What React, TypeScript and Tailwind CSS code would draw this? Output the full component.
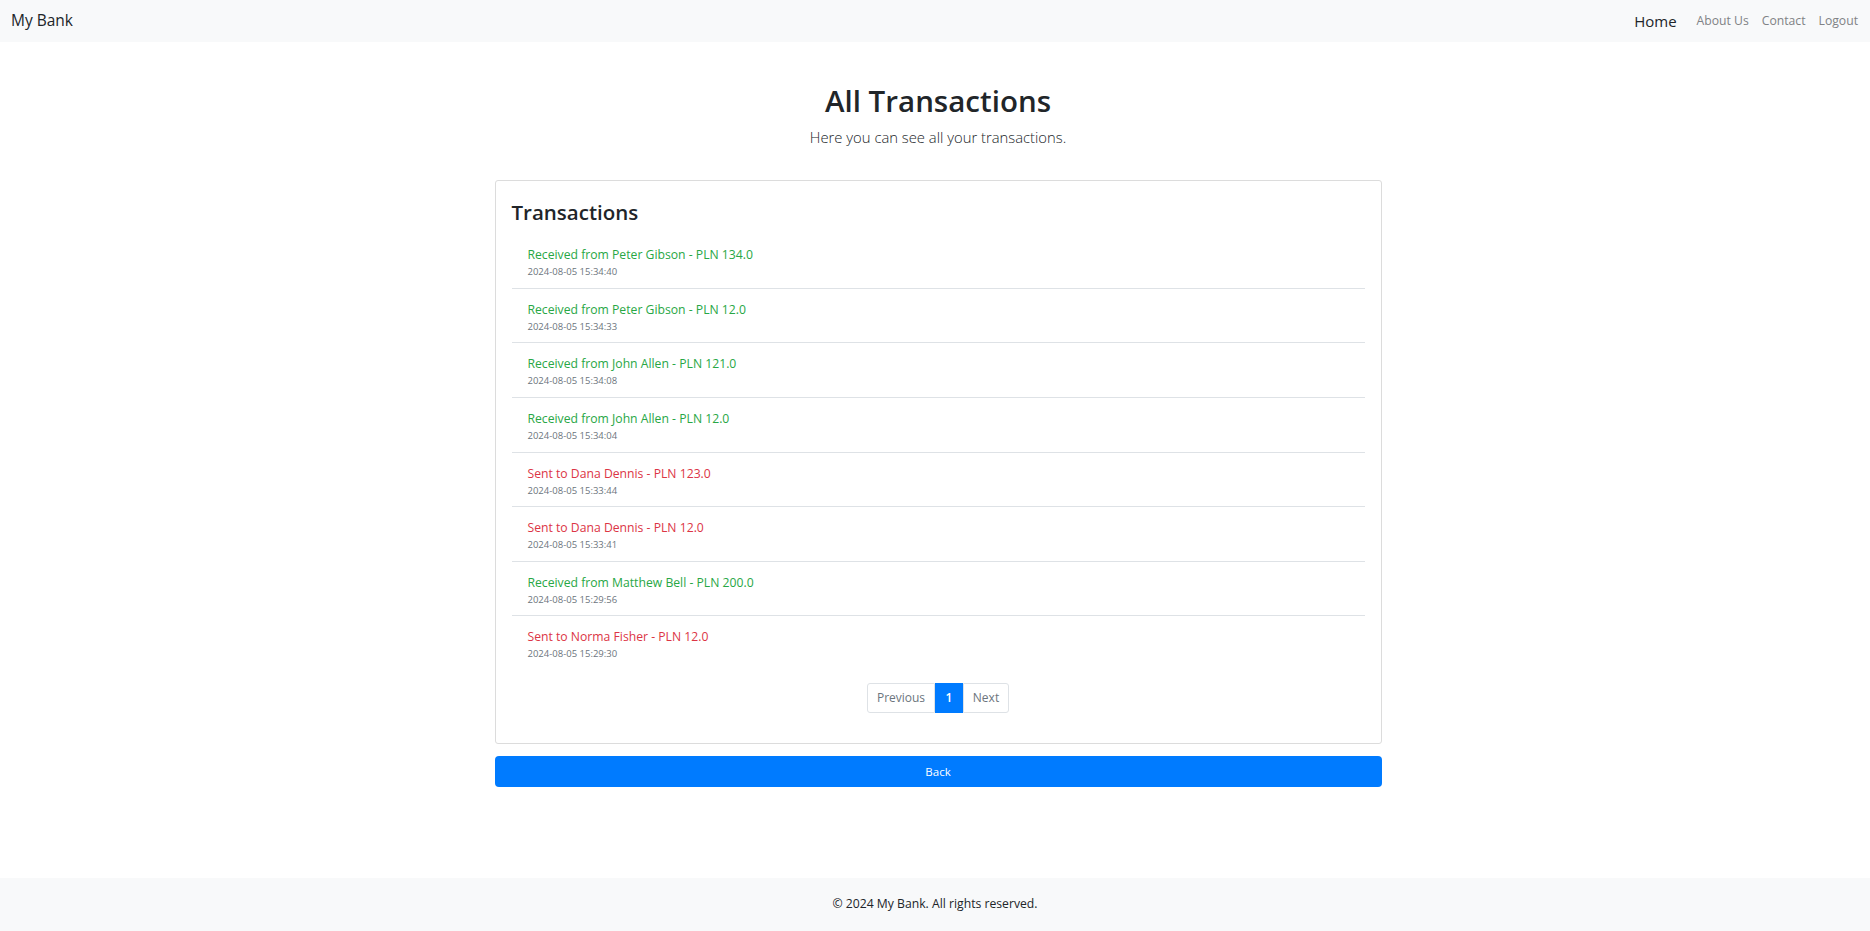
const transactions = [
  { text: "Received from Peter Gibson - PLN 134.0", date: "2024-08-05 15:34:40", received: true },
  { text: "Received from Peter Gibson - PLN 12.0", date: "2024-08-05 15:34:33", received: true },
  { text: "Received from John Allen - PLN 121.0", date: "2024-08-05 15:34:08", received: true },
  { text: "Received from John Allen - PLN 12.0", date: "2024-08-05 15:34:04", received: true },
  { text: "Sent to Dana Dennis - PLN 123.0", date: "2024-08-05 15:33:44", received: false },
  { text: "Sent to Dana Dennis - PLN 12.0", date: "2024-08-05 15:33:41", received: false },
  { text: "Received from Matthew Bell - PLN 200.0", date: "2024-08-05 15:29:56", received: true },
  { text: "Sent to Norma Fisher - PLN 12.0", date: "2024-08-05 15:29:30", received: false },
]

export default function App() {
  return (
    <div className="min-h-screen flex flex-col bg-white text-[#212529] font-['Open_Sans',sans-serif]">
      {/* navbar */}
      <nav className="h-[42px] bg-[#f8f9fa] flex items-center justify-between pl-[11px] pr-[12px]">
        <a className="text-[15.5px] text-[#212529]">My Bank</a>
        <ul className="flex items-center gap-[13px]">
          <li className="text-[15px] text-[#212529] mr-[7px]">Home</li>
          <li className="text-[12.2px] text-[#808285]">About Us</li>
          <li className="text-[12.2px] text-[#808285]">Contact</li>
          <li className="text-[12.2px] text-[#808285]">Logout</li>
        </ul>
      </nav>

      <main className="flex-1">
        <div className="text-center pt-[38px] pl-[6px]">
          <h1 className="text-[29.5px] font-semibold leading-[42px]">All Transactions</h1>
          <p className="text-[14.8px] font-light text-[#212529] mt-[4px]">Here you can see all your transactions.</p>
        </div>

        <div className="flex justify-center pl-[6px] mt-[32px]">
          <div className="w-[887px]">
            <div className="border border-[#dcdcdc] rounded-[3px] p-[16px] pb-[30px]">
              <h2 className="text-[20.5px] font-semibold leading-[28px] mt-[1px]">Transactions</h2>
              <ul className="mt-[8px]">
                {transactions.map((t, i) => (
                  <li
                    key={i}
                    className={`px-[16px] pt-[10px] pb-[9.6px] ${i < transactions.length - 1 ? "border-b border-[#dee2e6]" : ""}`}
                  >
                    <div className={`text-[12.2px] leading-[22px] ${t.received ? "text-[#28a745]" : "text-[#dc3545]"}`}>
                      {t.text}
                    </div>
                    <div className="text-[9.5px] leading-[12px] text-[#6c757d]">{t.date}</div>
                  </li>
                ))}
              </ul>
              <div className="flex justify-center mt-[13px]">
                <div className="flex h-[30px] text-[12px]">
                  <span className="w-[68px] flex items-center justify-center border border-[#dee2e6] rounded-l-[3px] text-[#6c757d]">Previous</span>
                  <span className="w-[28px] flex items-center justify-center bg-[#007bff] text-white font-semibold">1</span>
                  <span className="w-[46px] flex items-center justify-center border border-[#dee2e6] rounded-r-[3px] text-[#6c757d]">Next</span>
                </div>
              </div>
            </div>
            <button className="w-full h-[31px] mt-[12px] bg-[#007bff] rounded-[4px] text-white text-[11.5px]">
              Back
            </button>
          </div>
        </div>
      </main>

      <footer className="h-[53px] bg-[#f8f9fa] flex items-center justify-center text-[12.2px] text-[#212529]">
        © 2024 My Bank. All rights reserved.
      </footer>
    </div>
  )
}
